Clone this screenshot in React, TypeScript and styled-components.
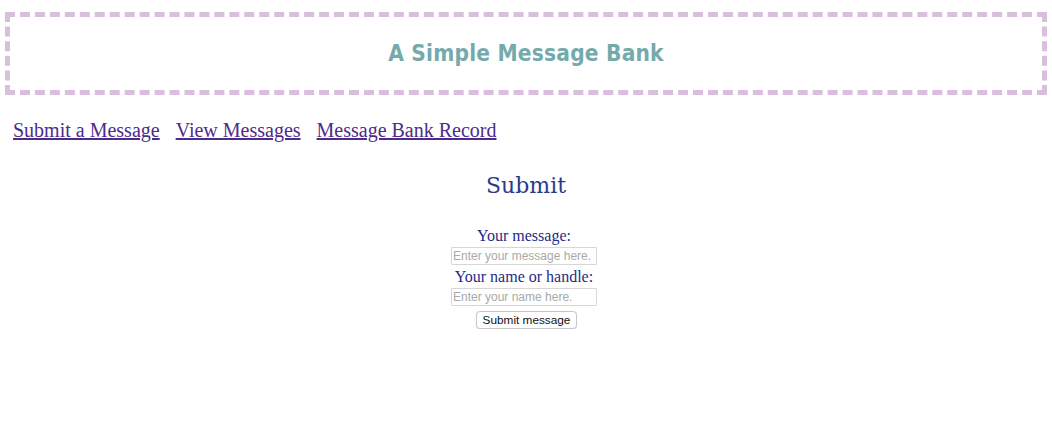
import React from "react";
import styled, { createGlobalStyle } from "styled-components";

const Global = createGlobalStyle`
  html, body { margin: 0; padding: 0; background: #ffffff; }
  body { font-family: "Liberation Serif", "Times New Roman", serif; }
`;

const Page = styled.div`
  display: flex;
  flex-direction: column;
  padding-top: 12px;
`;

const Banner = styled.header`
  margin: 0 5px;
  height: 73px;
  border: 5px dashed #d8bfdc;
  display: flex;
  align-items: center;
  justify-content: center;
`;

const Title = styled.h1`
  margin: 0;
  padding-bottom: 2px;
  font-family: "DejaVu Sans Condensed", "DejaVu Sans", "Comic Sans MS", sans-serif;
  font-stretch: condensed;
  font-weight: bold;
  font-size: 22.5px;
  letter-spacing: 0.2px;
  color: #74aaac;
`;

const Nav = styled.nav`
  display: flex;
  gap: 16px;
  padding: 0 13px;
  margin-top: 24px;
  line-height: 23px;
`;

const NavLink = styled.a`
  font-size: 20px;
  color: #4d2b8c;
  text-decoration: underline;
`;

const Main = styled.main`
  display: flex;
  flex-direction: column;
  align-items: center;
  margin-top: 31px;
`;

const Heading = styled.h2`
  margin: 0 0 27px;
  font-family: "DejaVu Serif", serif;
  font-weight: normal;
  font-size: 22px;
  line-height: 26px;
  color: #2b3a8c;
`;

const Form = styled.form`
  display: flex;
  flex-direction: column;
  align-items: center;
  margin-right: 4px;
`;

const Label = styled.label`
  font-size: 16px;
  line-height: 19px;
  color: #1f2b8a;
`;

const Field = styled.input`
  box-sizing: border-box;
  width: 146px;
  height: 18px;
  margin: 2px 0 2px;
  padding: 0 1px;
  border: 1px solid #d6d6d6;
  border-radius: 1px;
  font-family: "Liberation Sans", Arial, sans-serif;
  font-size: 12px;
  color: #222;
  &::placeholder { color: #a9a9a9; }
`;

const SubmitButton = styled.button`
  box-sizing: border-box;
  margin: 3px 0 0 5px;
  height: 18px;
  padding: 0 6px;
  background: #ffffff;
  border: 1px solid #c8c8c8;
  border-radius: 4px;
  font-family: "Liberation Sans", Arial, sans-serif;
  font-size: 11.8px;
  color: #111;
  box-shadow: 0 0.5px 1px rgba(0,0,0,0.12);
`;

export default function App() {
  return (
    <>
      <Global />
      <Page>
        <Banner>
          <Title>A Simple Message Bank</Title>
        </Banner>
        <Nav>
          <NavLink href="#submit">Submit a Message</NavLink>
          <NavLink href="#view">View Messages</NavLink>
          <NavLink href="#record">Message Bank Record</NavLink>
        </Nav>
        <Main>
          <Heading>Submit</Heading>
          <Form onSubmit={(e) => e.preventDefault()}>
            <Label htmlFor="msg">Your message:</Label>
            <Field id="msg" placeholder="Enter your message here." />
            <Label htmlFor="handle">Your name or handle:</Label>
            <Field id="handle" placeholder="Enter your name here." />
            <SubmitButton type="submit">Submit message</SubmitButton>
          </Form>
        </Main>
      </Page>
    </>
  );
}
